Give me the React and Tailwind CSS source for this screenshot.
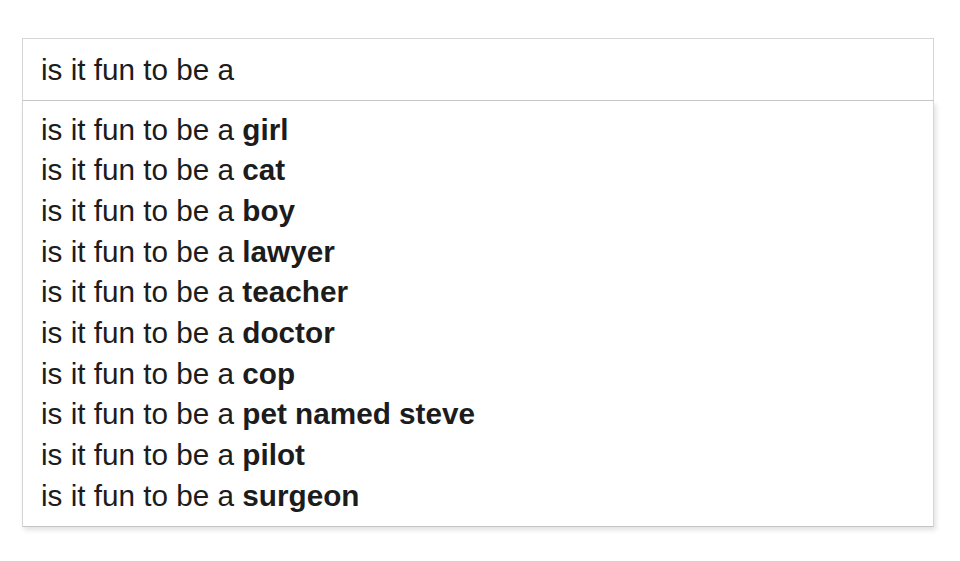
export default function App() {
  const items = ["girl","cat","boy","lawyer","teacher","doctor","cop","pet named steve","pilot","surgeon"];
  return (
    <div className="w-[960px] h-[561px] bg-white pt-[38px] pl-[22px]" style={{fontFamily: '"Liberation Sans", Arial, sans-serif'}}>
      <div className="w-[912px] text-[29.7px] leading-[40.67px] text-[#1c1c1c]">
        <div className="border border-[#d6d6d6] border-b-[#c8c8c8] pl-[18px] pt-[11px] pb-[9px]">is it fun to be a</div>
        <div className="border-x border-b border-[#d6d6d6] border-b-[#c4c4c4] pl-[18px] pt-[9px] pb-[10px] shadow-[2px_3px_5px_rgba(0,0,0,0.12)]">
          {items.map((t) => (
            <div key={t}>is it fun to be a <b className="font-bold">{t}</b></div>
          ))}
        </div>
      </div>
    </div>
  );
}
